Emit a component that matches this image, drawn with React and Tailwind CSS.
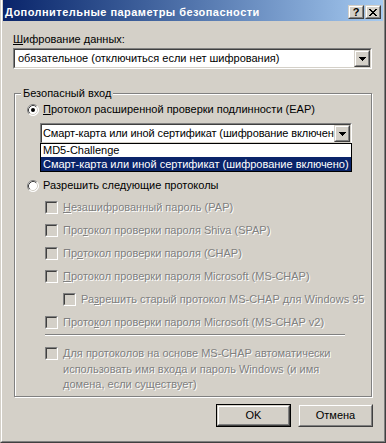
import React from "react";

const FONT = { fontFamily: '"Liberation Sans", Arial, sans-serif' };

function Raised({ className = "", innerClassName = "", children }) {
  return (
    <div className={`border border-t-[#D4D0C8] border-l-[#D4D0C8] border-r-[#404040] border-b-[#404040] ${className}`}>
      <div className={`h-full w-full border border-t-white border-l-white border-r-[#808080] border-b-[#808080] bg-[#D4D0C8] ${innerClassName}`}>
        {children}
      </div>
    </div>
  );
}

function Sunken({ className = "", innerClassName = "", children }) {
  return (
    <div className={`border border-t-[#808080] border-l-[#808080] border-r-white border-b-white ${className}`}>
      <div className={`h-full w-full border border-t-[#404040] border-l-[#404040] border-r-[#D4D0C8] border-b-[#D4D0C8] ${innerClassName}`}>
        {children}
      </div>
    </div>
  );
}

function Arrow() {
  return (
    <svg width="7" height="4" viewBox="0 0 7 4" shapeRendering="crispEdges">
      <path d="M0 0h7v1H0zM1 1h5v1H1zM2 2h3v1H2zM3 3h1v1H3z" fill="#000" />
    </svg>
  );
}

function DropButton() {
  return (
    <Raised className="h-[17px] w-[16px] shrink-0" innerClassName="flex items-center justify-center">
      <Arrow />
    </Raised>
  );
}

function Combo({ text, className = "", textClassName = "pl-[3px]" }) {
  return (
    <Sunken className={`h-[21px] ${className}`} innerClassName="flex items-center bg-white">
      <span className={`flex-1 overflow-hidden whitespace-nowrap text-[11px] text-black ${textClassName}`}>{text}</span>
      <DropButton />
    </Sunken>
  );
}

function Radio({ checked }) {
  return (
    <svg width="12" height="12" viewBox="0 0 12 12" className="shrink-0">
      <circle cx="6" cy="6" r="5.5" fill="#fff" />
      <path d="M2.11 9.89A5.5 5.5 0 0 1 9.89 2.11" fill="none" stroke="#808080" strokeWidth="1" />
      <path d="M9.89 2.11A5.5 5.5 0 0 1 2.11 9.89" fill="none" stroke="#fff" strokeWidth="1" />
      <path d="M2.82 9.18A4.5 4.5 0 0 1 9.18 2.82" fill="none" stroke="#404040" strokeWidth="1" />
      <path d="M9.18 2.82A4.5 4.5 0 0 1 2.82 9.18" fill="none" stroke="#D4D0C8" strokeWidth="1" />
      {checked && <circle cx="6" cy="6" r="2" fill="#000" />}
    </svg>
  );
}

function Check() {
  return <Sunken className="h-[13px] w-[13px] shrink-0" innerClassName="bg-[#D4D0C8]" />;
}

const dim = "text-[#808080] [text-shadow:1px_1px_0_#fff]";

function CheckRow({ pre = "", u, post, indent = false, className = "" }) {
  return (
    <div className={`flex h-[13px] items-center gap-[5px] ${indent ? "pl-[48px]" : "pl-[30px]"} ${className}`}>
      <Check />
      <span className={`whitespace-nowrap text-[11px] leading-[13px] ${dim}`}>
        {pre}
        <span className="underline">{u}</span>
        {post}
      </span>
    </div>
  );
}

export default function App() {
  return (
    <div className="h-[443px] w-[386px] overflow-hidden border-b border-r border-l border-b-[#404040] border-r-[#404040] border-l-[#D4D0C8] bg-[#D4D0C8]" style={FONT}>
      <div className="flex h-full flex-col border-b border-r border-l border-b-[#808080] border-r-[#808080] border-l-white px-px">
        {/* caption */}
        <div className="flex h-[21px] items-center bg-gradient-to-r from-[#0A246A] to-[#A6CAF0] pl-[2px] pr-[2px] pt-[3px]">
          <span className="flex-1 whitespace-nowrap text-[11px] font-bold tracking-[0.45px] text-white">
            Дополнительные параметры безопасности
          </span>
          <Raised className="h-[14px] w-[16px]" innerClassName="flex items-center justify-center">
            <span className="text-[11px] font-bold leading-none text-black">?</span>
          </Raised>
          <Raised className="ml-px h-[14px] w-[16px]" innerClassName="flex items-center justify-center">
            <svg width="8" height="7" viewBox="0 0 8 7" shapeRendering="crispEdges">
              <path d="M0 0h2v1H0zM6 0h2v1H6zM1 1h2v1H1zM5 1h2v1H5zM2 2h4v1H2zM3 3h2v1H3zM2 4h4v1H2zM1 5h2v1H1zM5 5h2v1H5zM0 6h2v1H0zM6 6h2v1H6z" fill="#000" />
            </svg>
          </Raised>
        </div>

        {/* body */}
        <div className="flex flex-col pl-[10px] pr-[10px]">
          <div className="mt-[12px] text-[11px] leading-[13px] text-black">
            <span className="underline">Ш</span>ифрование данных:
          </div>
          <Combo className="mt-[2px] w-[359px]" text="обязательное (отключиться если нет шифрования)" />

          {/* group box */}
          <div className="relative ml-px mt-[24px] h-[304px] w-[358px] border border-[#808080] shadow-[inset_1px_1px_0_#fff,1px_1px_0_#fff]">
            <span className="absolute left-[6px] top-[-7px] bg-[#D4D0C8] px-[2px] text-[11px] leading-[13px] text-black">
              Безопасный вход
            </span>

            <div className="mt-[9px] flex h-[13px] items-center gap-[4px] pl-[12px]">
              <Radio checked />
              <span className="whitespace-nowrap text-[11px] leading-[13px] text-black">
                <span className="underline">П</span>ротокол расширенной проверки подлинности (EAP)
              </span>
            </div>

            <div className="relative ml-[25px] mt-[7px] w-[312px]">
              <Combo
                text="Смарт-карта или иной сертификат (шифрование включено)"
                textClassName="pl-[1px] tracking-[-0.1px]"
              />
              <div className="absolute left-0 top-[20px] z-10 w-[312px] border border-black bg-white">
                <div className="h-[13px] whitespace-nowrap pl-[2px] text-[11px] leading-[13px] text-black">MD5-Challenge</div>
                <div className="h-[14px] whitespace-nowrap bg-[#0A246A] pl-[2px] text-[11px] leading-[14px] text-white">
                  Смарт-карта или иной сертификат (шифрование включено)
                </div>
              </div>
            </div>

            <div className="mt-[35px] flex h-[13px] items-center gap-[4px] pl-[12px]">
              <Radio />
              <span className="whitespace-nowrap text-[11px] leading-[13px] text-black">
                Разрешить сле<span className="underline">д</span>ующие протоколы
              </span>
            </div>

            <CheckRow className="mt-[9px]" u="Н" post="езашифрованный пароль (PAP)" />
            <CheckRow className="mt-[10px]" pre="Про" u="т" post="окол проверки пароля Shiva (SPAP)" />
            <CheckRow className="mt-[10px]" pre="Пр" u="о" post="токол проверки пароля (CHAP)" />
            <CheckRow className="mt-[10px]" u="П" post="ротокол проверки пароля Microsoft (MS-CHAP)" />
            <CheckRow className="mt-[10px]" indent pre="Ра" u="з" post="решить старый протокол MS-CHAP для Windows 95" />
            <CheckRow className="mt-[10px]" pre="Прото" u="к" post="ол проверки пароля Microsoft (MS-CHAP v2)" />

            <div className="ml-[30px] mt-[5px] h-[2px] w-[300px] border-t border-b border-t-[#808080] border-b-white" />

            <div className="mt-[10px] flex items-start gap-[5px] pl-[30px]">
              <div className="mt-px">
                <Check />
              </div>
              <span className={`whitespace-nowrap text-[11px] leading-[15.5px] ${dim}`}>
                <span className="underline">Д</span>ля протоколов на основе MS-CHAP автоматически
                <br />
                использовать имя входа и пароль Windows (и имя
                <br />
                домена, если существует)
              </span>
            </div>
          </div>

          {/* buttons */}
          <div className="mt-[7px] flex justify-end gap-[7px]">
            <div className="h-[23px] w-[75px] border border-black">
              <Raised className="h-full w-full" innerClassName="flex items-center justify-center">
                <span className="text-[11px] text-black">OK</span>
              </Raised>
            </div>
            <Raised className="h-[23px] w-[75px]" innerClassName="flex items-center justify-center">
              <span className="text-[11px] text-black">Отмена</span>
            </Raised>
          </div>
        </div>
      </div>
    </div>
  );
}
